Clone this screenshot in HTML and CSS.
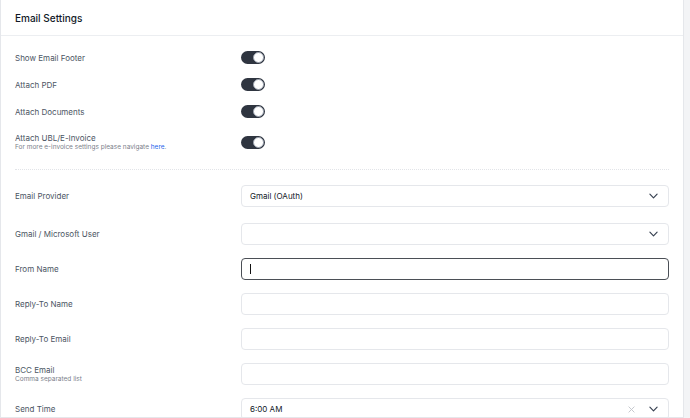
FILE: index.html
```html
<!DOCTYPE html>
<html>
    <head>
        <meta charset="utf-8" />
        <title>Email Settings</title>
        <link rel="stylesheet" href="styles.css">
    </head>
    <body>
        <div class="card">
            <div class="card-header">Email Settings</div>

            <div class="card-body">
                <div class="toggles">
                    <div class="toggle-row">
                        <div class="label">Show Email Footer</div>
                        <div class="toggle"><span class="knob"></span></div>
                    </div>
                    <div class="toggle-row">
                        <div class="label">Attach PDF</div>
                        <div class="toggle"><span class="knob"></span></div>
                    </div>
                    <div class="toggle-row">
                        <div class="label">Attach Documents</div>
                        <div class="toggle"><span class="knob"></span></div>
                    </div>
                    <div class="toggle-row tall">
                        <div class="label">
                            Attach UBL/E-Invoice
                            <div class="help">For more e-invoice settings please navigate <a href="#">here</a>.</div>
                        </div>
                        <div class="toggle"><span class="knob"></span></div>
                    </div>
                </div>

                <div class="divider"></div>

                <div class="fields">
                    <div class="field-row first">
                        <div class="label">Email Provider</div>
                        <div class="input select">
                            <span class="value">Gmail (OAuth)</span>
                            <svg class="chevron" viewBox="0 0 10 6" width="9" height="6"><path d="M1 1l4 4 4-4" fill="none" stroke="#374151" stroke-width="1.3" stroke-linecap="round" stroke-linejoin="round"/></svg>
                        </div>
                    </div>
                    <div class="field-row">
                        <div class="label">Gmail / Microsoft User</div>
                        <div class="input select">
                            <span class="value"></span>
                            <svg class="chevron" viewBox="0 0 10 6" width="9" height="6"><path d="M1 1l4 4 4-4" fill="none" stroke="#374151" stroke-width="1.3" stroke-linecap="round" stroke-linejoin="round"/></svg>
                        </div>
                    </div>
                    <div class="field-row">
                        <div class="label">From Name</div>
                        <div class="input focused"><span class="caret"></span></div>
                    </div>
                    <div class="field-row">
                        <div class="label">Reply-To Name</div>
                        <div class="input"></div>
                    </div>
                    <div class="field-row">
                        <div class="label">Reply-To Email</div>
                        <div class="input"></div>
                    </div>
                    <div class="field-row">
                        <div class="label">
                            BCC Email
                            <div class="help">Comma separated list</div>
                        </div>
                        <div class="input"></div>
                    </div>
                    <div class="field-row">
                        <div class="label">Send Time</div>
                        <div class="input select">
                            <span class="value">6:00 AM</span>
                            <svg class="clear" viewBox="0 0 8 8" width="7" height="7"><path d="M1 1l6 6M7 1l-6 6" fill="none" stroke="#c4c7cc" stroke-width="1.1" stroke-linecap="round"/></svg>
                            <svg class="chevron" viewBox="0 0 10 6" width="9" height="6"><path d="M1 1l4 4 4-4" fill="none" stroke="#374151" stroke-width="1.3" stroke-linecap="round" stroke-linejoin="round"/></svg>
                        </div>
                    </div>
                </div>
            </div>
        </div>
    </body>
</html>
```

FILE: styles.css
```css
body {
	margin: 0;
	background: #f3f4f6;
	font-family: Inter, "Noto Sans", sans-serif;
	color: #4b5563;
}

.card {
	width: 684px;
	height: 418px;
	box-sizing: border-box;
	background: #fff;
	border: 1px solid #e5e7eb;
	border-top: 0;
	overflow: hidden;
}

.card-header {
	height: 36px;
	box-sizing: border-box;
	display: flex;
	align-items: center;
	padding: 0 14px;
	border-bottom: 1px solid #eceef1;
	font-size: 10px;
	font-weight: 500;
	color: #111827;
}

.card-body {
	padding: 8px 14px 0 14px;
}

.label {
	font-size: 8px;
	color: #4b5563;
	line-height: 10px;
}

.help {
	font-size: 6.5px;
	line-height: 9px;
	color: #7b818b;
}

.help a {
	color: #2563eb;
	text-decoration: none;
}

.toggle-row {
	display: grid;
	grid-template-columns: 226px 1fr;
	align-items: center;
	height: 27px;
}

.toggle-row.tall {
	height: 34px;
}

.toggle {
	width: 24px;
	height: 13px;
	border-radius: 7px;
	background: #2f3540;
	position: relative;
}

.knob {
	position: absolute;
	right: 1px;
	top: 1px;
	width: 11px;
	height: 11px;
	border-radius: 50%;
	background: #fff;
	box-sizing: border-box;
	border: 1px solid #9ca3af;
}

.divider {
	margin: 10px 0 15px 0;
	border-top: 1px dotted #e2e4e8;
}

.fields {
	display: flex;
	flex-direction: column;
	gap: 13px;
}

.field-row {
	display: grid;
	grid-template-columns: 226px 1fr;
	align-items: center;
}

.field-row.first {
	margin-bottom: 3px;
}

.input {
	height: 22px;
	box-sizing: border-box;
	border: 1px solid #e5e7eb;
	border-radius: 4px;
	display: flex;
	align-items: center;
	padding: 0 8px;
	font-size: 8px;
	color: #111827;
}

.input.focused {
	border: 1.5px solid #4b4f56;
	padding-left: 7.5px;
}

.caret {
	width: 1px;
	height: 10px;
	background: #111;
}

.select .value {
	flex: 1;
}

.clear {
	margin-right: 14px;
}

.chevron {
	margin-right: 2px;
}
```
